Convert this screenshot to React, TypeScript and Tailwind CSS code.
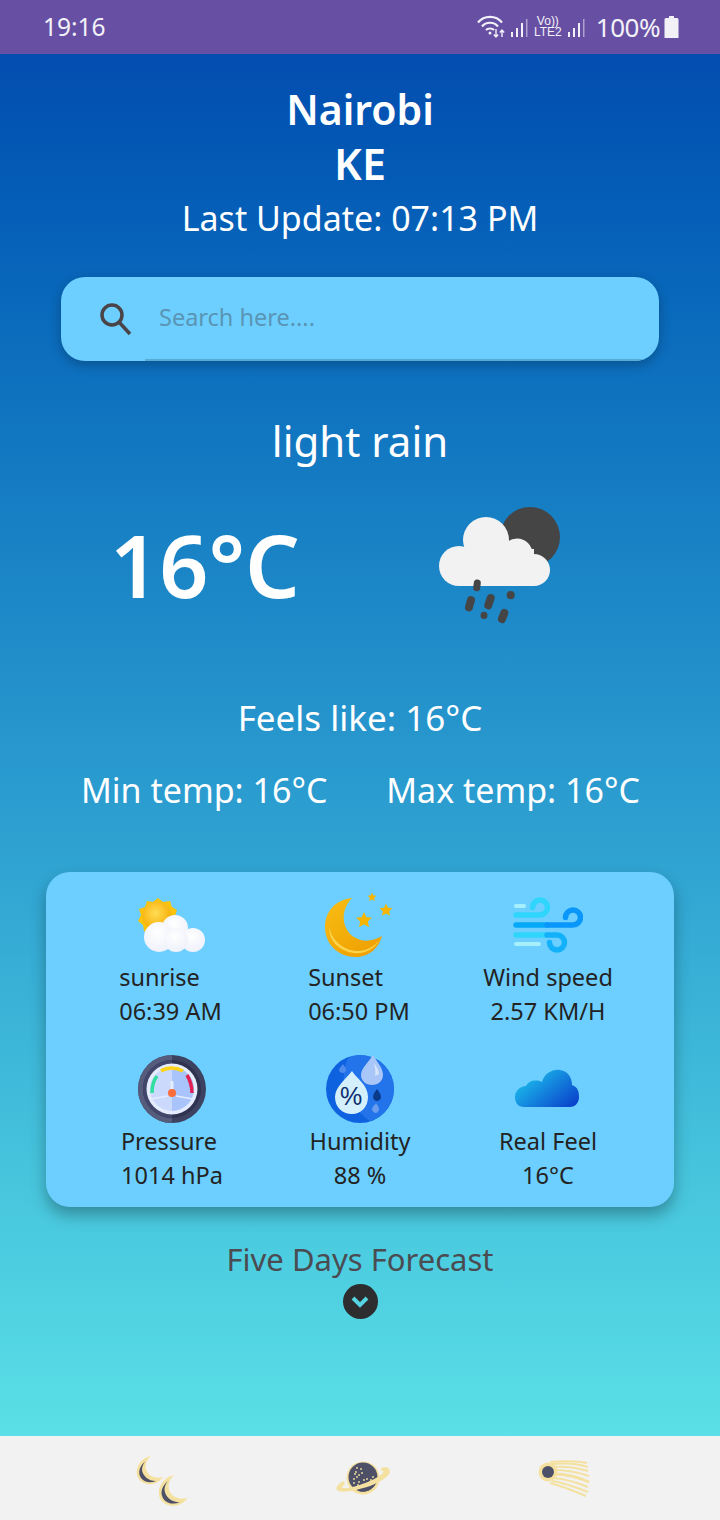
import { ReactNode } from 'react';

const font = 'font-["Noto_Sans",sans-serif]';

const Signal = () => (
	<svg width="19" height="24" viewBox="0 0 19 24" fill="currentColor">
		<rect x="1" y="17" width="2" height="5" />
		<rect x="6" y="13" width="2" height="9" />
		<rect x="11" y="8" width="2" height="14" />
		<rect x="16" y="4" width="1.500" height="18" opacity="0.5" />
	</svg>
);

const StatusIcons = () => (
	<div className="flex items-center text-[#f3f1f8]">
		<svg width="33" height="24" viewBox="0 0 33 24" fill="none" stroke="currentColor">
			<path d="M1 7.500 C7 0 19 0 25 7.500" strokeWidth="2.200" />
			<path d="M5 11.500 C9 6.500 17 6.500 21 11.500" strokeWidth="2.200" />
			<path d="M9 15 C11 13 15 13 17 15" strokeWidth="2.200" />
			<circle cx="13" cy="18" r="1.500" fill="currentColor" stroke="none" />
			<path d="M19 14v8M16.800 19.500l2.200 2.500 2.200-2.500M25 22v-7M22.800 17.500l2.200-2.500 2.200 2.500" strokeWidth="1.400" />
		</svg>
		<Signal />
		<div className="ml-[5px] mr-[5px] flex flex-col items-center text-[12px] leading-[11px] font-medium font-['Liberation_Sans',sans-serif]">
			<span>Vo))</span>
			<span>LTE2</span>
		</div>
		<Signal />
		<span className="ml-[10px] text-[26px] leading-none tracking-[-0.5px]">100%</span>
		<svg width="15" height="22" viewBox="0 0 15 22" fill="currentColor" className="ml-[4px]">
			<path d="M5 0h5v2h3a1.500 1.500 0 0 1 1.500 1.500V22H.5V3.500A1.500 1.500 0 0 1 2 2h3z" />
		</svg>
	</div>
);

const RainCloud = () => (
	<svg width="124" height="126" viewBox="0 0 124 126">
		<circle cx="91" cy="38" r="30" fill="#454545" />
		<g fill="#f2f2f2">
			<circle cx="20" cy="67" r="20" />
			<circle cx="47" cy="41" r="23" />
			<circle cx="78" cy="55" r="15.500" />
			<circle cx="95" cy="71" r="16" />
			<rect x="20" y="50" width="75" height="37" />
		</g>
		<g stroke="#454545" strokeLinecap="round" fill="none">
			<path d="M38.300 84 L37.700 88.700" strokeWidth="7" />
			<path d="M32 101 L30 108.300" strokeWidth="8" />
			<path d="M51.700 99 L49.300 106.300" strokeWidth="8" />
			<path d="M71.700 96 L71.700 96.200" strokeWidth="8" />
			<path d="M45 116.300 L45 116.500" strokeWidth="7" />
			<path d="M65.300 114 L63 120" strokeWidth="8" />
		</g>
	</svg>
);

const SunCloud = () => (
	<svg width="70" height="60" viewBox="0 0 70 60">
		<defs>
			<radialGradient id="sunFill" cx="0.45" cy="0.4" r="0.6">
				<stop offset="0" stopColor="#ffdc55" />
				<stop offset="1" stopColor="#f6ad02" />
			</radialGradient>
			<radialGradient id="puff" cx="0.45" cy="0.35" r="0.7">
				<stop offset="0" stopColor="#ffffff" />
				<stop offset="1" stopColor="#eef0fa" />
			</radialGradient>
		</defs>
		<path
			d="M21 3 L26 7 L33 6 L35 12 L40 15 L38 21 L38 34 L12 40 L7 36 L6 30 L1 26 L4 20 L2 14 L8 12 L10 6 L16 7 Z"
			fill="#fbc30a"
		/>
		<circle cx="20" cy="21" r="14.500" fill="url(#sunFill)" />
		<g fill="url(#puff)">
			<circle cx="38" cy="33" r="13" />
			<circle cx="22" cy="42" r="15" />
			<circle cx="56" cy="45" r="12" />
			<circle cx="39" cy="45" r="12" />
		</g>
	</svg>
);

const Star = ({ x, y, s }: { x: number; y: number; s: number }) => (
	<path
		transform={`translate(${x} ${y}) scale(${s})`}
		d="M0 -10 L3 -3.500 L10 -3 L4.800 1.800 L6.300 9 L0 5.300 L-6.300 9 L-4.800 1.800 L-10 -3 L-3 -3.500 Z"
		fill="#f7b500"
	/>
);

const MoonStars = () => (
	<svg width="72" height="68" viewBox="0 0 72 68">
		<defs>
			<linearGradient id="moonFill" x1="0.1" y1="0" x2="0.8" y2="1">
				<stop offset="0" stopColor="#f9bd12" />
				<stop offset="1" stopColor="#ee9f03" />
			</linearGradient>
		</defs>
		<path
			d="M28 7 C10 9 1 22 1 36 C1 53 14 66 32 66 C46 66 55 56 58 45 C48 51 38 51 30 46 C20 40 14 22 28 7 Z"
			fill="url(#moonFill)"
		/>
		<path d="M5 36 C8 50 20 60 34 60 C44 60 52 54 56 48 C50 60 38 63 30 62 C15 60 5 50 5 36Z" fill="#fbd44d" />
		<Star x={40} y={29} s={0.8} />
		<Star x={62} y={19} s={0.65} />
		<Star x={48} y={6} s={0.45} />
	</svg>
);

const Wind = () => (
	<svg width="70" height="60" viewBox="0 0 70 60" fill="none" strokeLinecap="round" strokeWidth="5.500">
		<path d="M3 11H11" stroke="#a5f0fb" strokeWidth="4" />
		<path d="M3 20H27 A7.500 7.500 0 1 0 19.500 12.500" stroke="#2fd5fb" />
		<path d="M3 30H34" stroke="#06a9f7" />
		<path d="M34 30H60 A7.500 7.500 0 1 0 52.500 22.500" stroke="#0a97fb" />
		<path d="M3 40H34" stroke="#30d5fb" />
		<path d="M34 40H44 A7.500 7.500 0 1 1 36.500 47.500" stroke="#12b1fa" />
		<path d="M3 49H26" stroke="#a5f0fb" strokeWidth="4" />
	</svg>
);

const Gauge = () => (
	<svg width="68" height="68" viewBox="0 0 68 68" fill="none">
		<circle cx="34" cy="34" r="34" fill="#3d4260" />
		<path d="M34 0a34 34 0 0 0 0 68z" fill="#565c7c" />
		<circle cx="34" cy="34" r="29" fill="#2f3350" />
		<path d="M34 5a29 29 0 0 0 0 58z" fill="#41466a" />
		<circle cx="34" cy="34" r="25.500" fill="#e4ecfd" />
		<path d="M34 12a22 22 0 0 1 0 44z" fill="#a9c4fa" />
		<path d="M34 12a22 22 0 0 0 0 44z" fill="#cbd9fc" />
		<path d="M13 44 L30 41 M38 41 L55 44" stroke="#e4ecfd" strokeWidth="1.500" />
		<path d="M14 38 C14 30 15 26 19 21" stroke="#2fdf9f" strokeWidth="3.500" />
		<path d="M23 16 C29 12 38 12 45 16" stroke="#ffd21c" strokeWidth="3.500" />
		<path d="M49 20 C52 25 54 30 54 38" stroke="#e12153" strokeWidth="3.500" />
		<path d="M34 26V38" stroke="#e4ecfd" strokeWidth="3" />
		<circle cx="34" cy="38" r="4" fill="#fb6d3a" />
	</svg>
);

const Humidity = () => (
	<svg width="68" height="68" viewBox="0 0 68 68">
		<circle cx="34" cy="34" r="34" fill="#0e62e0" />
		<path d="M34 0a34 34 0 0 1 34 34 34 34 0 0 1-24 32C20 50 12 24 22 3a34 34 0 0 1 12-3z" fill="#2374ea" />
		<path d="M47 0 C51 7 57 13 57 20 C57 26 52 30 46 30 C40 30 35 26 35 20 C35 13 43 7 47 0Z" fill="#a8c6f7" />
		<path d="M48 8 C51 12 53 16 53 19 L49 21 C50 17 49 13 48 8Z" fill="#d6e5fb" />
		<path d="M26 16 C31 24 42 30 42 42 C42 52 35 59 26 59 C16 59 9 52 9 42 C9 32 20 24 26 16Z" fill="#d4f0fd" />
		<text x="25" y="50" textAnchor="middle" fontSize="25" fontFamily="Liberation Sans" fill="#0d2e6e">%</text>
		<path d="M51 34 C53 37 55 39 55 42 C55 44 53 46 51 46 C49 46 47 44 47 42 C47 39 49 37 51 34Z" fill="#0a3a8a" />
		<path d="M50 48 C51 50 53 52 53 54 C53 56 51 58 50 58 C48 58 46 56 46 54 C46 52 49 50 50 48Z" fill="#6a9cee" />
		<path d="M17 9 C18 11 20 13 20 15 C20 17 18 18 17 18 C15 18 13 17 13 15 C13 13 16 11 17 9Z" fill="#4f8bec" />
	</svg>
);

const GradCloud = () => (
	<svg width="68" height="44" viewBox="0 0 68 44">
		<defs>
			<linearGradient id="cloudFill" x1="0" y1="0.2" x2="1" y2="0.9">
				<stop offset="0" stopColor="#1cc7ee" />
				<stop offset="1" stopColor="#0a3ecb" />
			</linearGradient>
		</defs>
		<path
			d="M10 40 C4 40 1 36 1 30 C1 24 6 19 12 19 C14 14 22 12 28 15 C30 7 38 2 46 3 C54 4 58 11 58 18 C64 20 65 25 65 30 C65 36 61 40 56 40 Z"
			fill="url(#cloudFill)"
		/>
	</svg>
);

const Crescent = ({ transform }: { transform: string }) => (
	<g transform={transform}>
		<path d="M15 0 C4 2 -2 13 2 22 C7 30 20 31 27 21 C19 23 12 20 10 13 C9 8 11 3 15 0Z" fill="#f4e1a0" />
		<path d="M11 4 C4 9 1 16 5 22 C9 27 15 27 20 25 C12 25 7 20 6 14 C6 10 8 6 11 4Z" fill="#4e5068" />
	</g>
);

const Moons = () => (
	<svg width="56" height="56" viewBox="0 0 56 56">
		<Crescent transform="translate(2 4)" />
		<Crescent transform="translate(24 23) scale(1.090)" />
	</svg>
);

const speckles = [
	[21, 12], [19, 19], [24, 22], [28, 25], [34, 23], [22, 8], [19, 23], [26, 9], [24, 15], [22, 17],
	[29, 20], [32, 19], [36, 20], [38, 17], [23, 25], [20, 14], [27, 13], [31, 24],
];

const Planet = () => (
	<svg width="56" height="40" viewBox="0 0 56 40">
		<circle cx="28" cy="18" r="16.500" fill="#f4e1a0" />
		<circle cx="28" cy="17" r="14.500" fill="#4e5068" />
		<g fill="#f4e1a0">
			{speckles.map(([cx, cy]) => (
				<circle key={`${cx}-${cy}`} cx={cx} cy={cy} r="0.900" />
			))}
		</g>
		<path
			d="M46 8 C52 6 55 8 55 12 C54 17 42 24 32 27 C22 30 6 34 2 30 C0 27 4 23 9 21 L10 24 C7 26 6 28 9 28 C20 28 40 20 47 14 C50 11 48 10 46 11 Z"
			fill="#f4e1a0"
		/>
		<path d="M22 30 C28 30 36 27 40 25 C36 31 28 34 22 30Z" fill="#4e5068" />
	</svg>
);

const Comet = () => (
	<svg width="54" height="38" viewBox="0 0 54 38" fill="none">
		<g stroke="#f4e1a0" strokeWidth="2">
			<path d="M12 2 C24 1 40 1 49 3" />
			<path d="M14 4 C26 3 40 4 50 7" />
			<path d="M14 7 C26 6 40 8 50 11" />
			<path d="M16 10 C30 10 42 13 51 16" />
			<path d="M16 14 C30 14 42 18 51 22" strokeWidth="3" />
			<path d="M16 18 C28 19 40 23 50 27" />
			<path d="M14 21 C26 23 40 28 50 32" />
			<path d="M12 23 C24 26 36 31 48 36" />
		</g>
		<circle cx="10" cy="12" r="9.500" fill="#f4e1a0" />
		<circle cx="10" cy="12" r="6" fill="#4e5068" />
	</svg>
);

type Stat = { icon: ReactNode; label: string; value: string; boxClass?: string; labelClass?: string };

const stats: Stat[] = [
	{ icon: <SunCloud />, label: 'sunrise', value: '06:39 AM', boxClass: 'items-start mr-[3px]' },
	{ icon: <MoonStars />, label: 'Sunset', value: '06:50 PM', boxClass: 'items-start mr-[2px]' },
	{ icon: <Wind />, label: 'Wind speed', value: '2.57 KM/H', boxClass: 'items-center' },
	{ icon: <Gauge />, label: 'Pressure', value: '1014 hPa', boxClass: 'items-center', labelClass: 'mr-[6px]' },
	{ icon: <Humidity />, label: 'Humidity', value: '88 %', boxClass: 'items-center' },
	{ icon: <GradCloud />, label: 'Real Feel', value: '16°C', boxClass: 'items-center' },
];

export default function App() {
	return (
		<div className={`flex h-[1520px] w-[720px] flex-col overflow-hidden ${font}`}>
			<div className="flex h-[54px] shrink-0 items-center justify-between bg-[#6750a3] pl-[43px] pr-[41px] text-[#f3f1f8]">
				<span className="text-[24.500px] leading-none">19:16</span>
				<StatusIcons />
			</div>

			<div className="flex flex-1 flex-col items-center bg-gradient-to-b from-[#034db0] to-[#5ae0e6] text-white">
				<h1 className="mt-[28px] text-[41px] leading-[55px] font-semibold">Nairobi</h1>
				<h2 className="text-[43px] leading-[54px] font-semibold">KE</h2>
				<p className="text-[34px] leading-[55px]">Last Update: 07:13 PM</p>

				<div className="mt-[31px] flex h-[84px] w-[598px] items-center overflow-hidden rounded-[24px] bg-[#6ccfff] pl-[38px] shadow-[0_4px_12px_rgba(0,0,0,0.25)]">
					<svg width="34" height="34" viewBox="0 0 34 34" fill="none" stroke="#4a4448" strokeWidth="3.500">
						<circle cx="13" cy="13" r="10" />
						<path d="M20 20l11 12" />
					</svg>
					<div className="ml-[12px] flex h-full flex-1 items-center border-b-2 border-[#58acd8]">
						<input
							readOnly
							placeholder="Search here...."
							className="w-full bg-transparent pl-[14px] text-[23.500px] text-[#4a4a50] outline-none placeholder:text-[#5a95b5]"
						/>
					</div>
				</div>

				<p className="mt-[49px] text-[42px] leading-[62px]">light rain</p>

				<div className="flex h-[190px] w-full items-start">
					<span className="ml-[110px] mt-[33px] w-[190px] text-[86px] leading-[120px] font-semibold">16°C</span>
					<div className="ml-[139px] mt-[27px]">
						<RainCloud />
					</div>
				</div>

				<p className="mt-[34px] text-[35px] leading-[44px]">Feels like: 16°C</p>
				<div className="mt-[28px] flex w-full justify-between pl-[81px] pr-[80px] text-[34px] leading-[44px]">
					<span>Min temp: 16°C</span>
					<span>Max temp: 16°C</span>
				</div>

				<div className="mt-[60px] grid h-[335px] w-[628px] grid-cols-3 content-start rounded-[24px] bg-[#6ccfff] px-[32px] pt-[19px] text-[23.500px] leading-[34px] text-[#232323] shadow-[0_8px_16px_rgba(0,0,0,0.3)]">
					{stats.map((s, i) => (
						<div key={s.label} className={`flex flex-col items-center ${i >= 3 ? 'h-[154px] pt-[2px]' : 'h-[162px]'}`}>
							<div className="flex h-[68px] items-center justify-center">{s.icon}</div>
							<div className={`mt-[1px] flex flex-col ${s.boxClass}`}>
								<span className={s.labelClass}>{s.label}</span>
								<span>{s.value}</span>
							</div>
						</div>
					))}
				</div>

				<p className="mt-[31px] text-[31px] leading-[42px] text-[#4b4b52]">Five Days Forecast</p>
				<div className="mt-[4px] flex h-[35px] w-[35px] items-center justify-center rounded-full bg-[#2d2d2f]">
					<svg width="18" height="12" viewBox="0 0 18 12" fill="none" stroke="#55d4e2" strokeWidth="4">
						<path d="M2 2l7 7 7-7" />
					</svg>
				</div>
			</div>

			<div className="flex h-[84px] shrink-0 items-center bg-[#f2f2f2] pl-[134px]">
				<div className="mt-[4px] w-[56px]">
					<Moons />
				</div>
				<div className="ml-[145px] mt-[4px] w-[56px]">
					<Planet />
				</div>
				<div className="ml-[147px] mt-[2px] w-[54px]">
					<Comet />
				</div>
			</div>
		</div>
	);
}
